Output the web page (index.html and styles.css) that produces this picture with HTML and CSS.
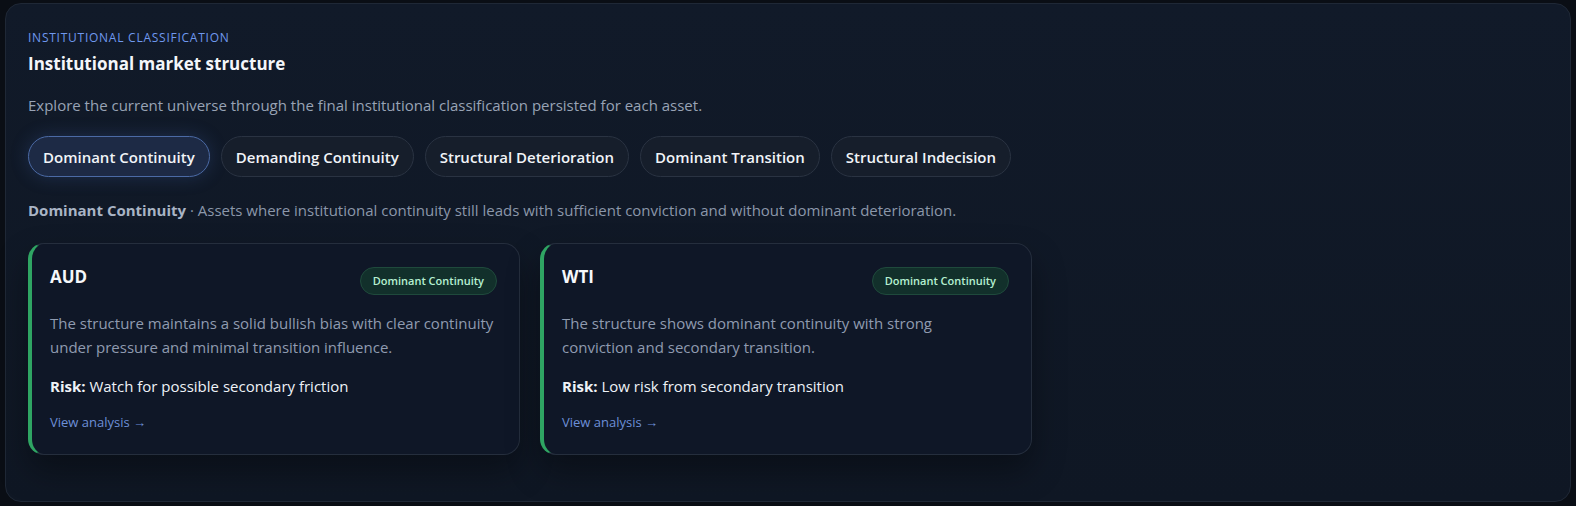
FILE: index.html
```html
<!DOCTYPE html>
<html lang="en">
<head>
<meta charset="utf-8">
<title>Institutional market structure</title>
<link rel="stylesheet" href="styles.css">
</head>
<body>
<section class="panel">
  <div class="eyebrow">INSTITUTIONAL CLASSIFICATION</div>
  <h2 class="title">Institutional market structure</h2>
  <p class="intro">Explore the current universe through the final institutional classification persisted for each asset.</p>
  <div class="tabs">
    <button class="tab active">Dominant Continuity</button>
    <button class="tab">Demanding Continuity</button>
    <button class="tab">Structural Deterioration</button>
    <button class="tab">Dominant Transition</button>
    <button class="tab">Structural Indecision</button>
  </div>
  <p class="summary"><strong>Dominant Continuity</strong> · Assets where institutional continuity still leads with sufficient conviction and without dominant deterioration.</p>
  <div class="cards">
    <article class="card">
      <div class="card-head">
        <h3 class="asset">AUD</h3>
        <span class="badge">Dominant Continuity</span>
      </div>
      <p class="desc">The structure maintains a solid bullish bias with clear continuity under pressure and minimal transition influence.</p>
      <p class="risk"><strong>Risk:</strong> Watch for possible secondary friction</p>
      <a class="link" href="#">View analysis →</a>
    </article>
    <article class="card">
      <div class="card-head">
        <h3 class="asset">WTI</h3>
        <span class="badge">Dominant Continuity</span>
      </div>
      <p class="desc">The structure shows dominant continuity with strong<br>conviction and secondary transition.</p>
      <p class="risk"><strong>Risk:</strong> Low risk from secondary transition</p>
      <a class="link" href="#">View analysis →</a>
    </article>
  </div>
</section>
</body>
</html>
```
FILE: styles.css
```css
* { box-sizing: border-box; }
html, body { margin: 0; }
body {
  background: #0a0e15;
  padding: 3px 5px 4px 5px;
  font-family: "Segoe UI", "Open Sans", "Noto Sans", sans-serif;
  color: #e6ebf2;
}
.panel {
  border: 1px solid #1f2836;
  border-radius: 16px;
  background: linear-gradient(180deg, #111a29 0%, #0f1724 100%);
  padding: 26px 22px 0 22px;
  height: 499px;
}
.eyebrow {
  font-size: 12px;
  letter-spacing: 0.75px;
  color: #6f98ee;
  line-height: 16px;
}
.title {
  margin: 7px 0 0 0;
  font-size: 17px;
  font-weight: 700;
  line-height: 22px;
  color: #f4f6fa;
}
.intro {
  margin: 19px 0 0 0;
  font-size: 15px;
  line-height: 22px;
  color: #98a3b5;
}
.tabs {
  display: flex;
  gap: 11px;
  margin-top: 20px;
}
.tab {
  font-family: inherit;
  font-size: 15px;
  font-weight: 600;
  color: #f1f4f8;
  background: #161e2b;
  border: 1px solid #2a3342;
  border-radius: 999px;
  height: 41px;
  padding: 0 14px;
}
.tab.active {
  background: #1d2a45;
  border-color: #4b6aa5;
  box-shadow: 0 0 18px rgba(70, 110, 190, 0.25);
}
.summary {
  margin: 22px 0 0 0;
  font-size: 15px;
  line-height: 22px;
  color: #8b97aa;
}
.summary strong { color: #a9b4c5; font-weight: 700; }
.cards {
  display: flex;
  gap: 20px;
  margin-top: 22px;
}
.card {
  width: 492px;
  height: 212px;
  border: 1px solid #252e3d;
  border-left: 4px solid #2fa563;
  border-radius: 16px;
  background: #0f1727;
  padding: 19px 22px 0 18px;
  box-shadow: 0 16px 32px rgba(0, 0, 0, 0.35);
}
.card-head {
  display: flex;
  justify-content: space-between;
  align-items: flex-start;
}
.asset {
  margin: 2px 0 0 0;
  font-size: 17px;
  font-weight: 700;
  line-height: 24px;
  color: #f6f8fb;
}
.badge {
  font-size: 11px;
  font-weight: 600;
  color: #b6f0d2;
  background: #12302b;
  border: 1px solid #1f4a3c;
  border-radius: 999px;
  height: 28px;
  line-height: 26px;
  padding: 0 12px;
  margin-top: 4px;
}
.desc {
  margin: 16px 0 0 0;
  font-size: 15px;
  line-height: 24px;
  color: #8f9bb0;
}
.risk {
  margin: 16px 0 0 0;
  font-size: 15px;
  line-height: 22px;
  color: #eef2f7;
}
.risk strong { font-weight: 700; }
.link {
  display: inline-block;
  margin-top: 16px;
  font-size: 13px;
  line-height: 18px;
  color: #6d8fd8;
  text-decoration: none;
}
```
